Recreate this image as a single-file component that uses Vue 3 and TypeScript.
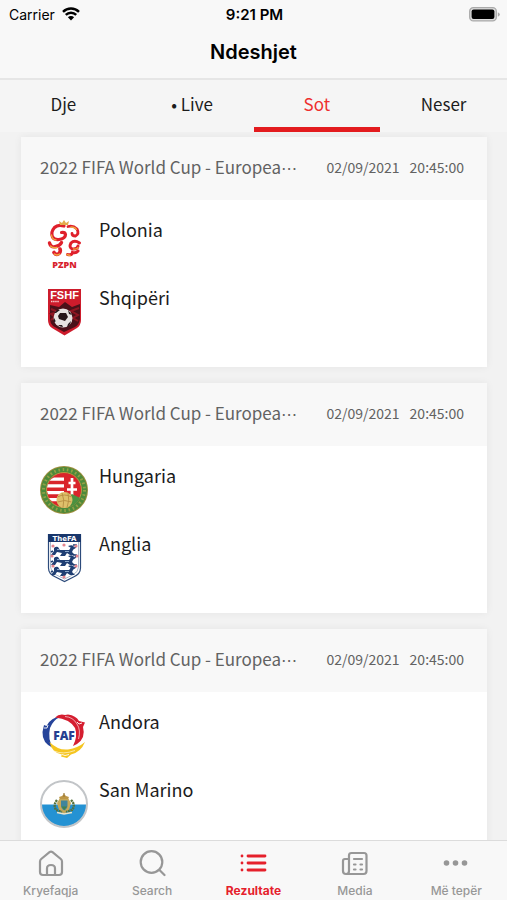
<script setup lang="ts">
import { ref } from 'vue'

type Crest = 'poland' | 'albania' | 'hungary' | 'england' | 'andorra' | 'sanmarino'

interface Team {
  name: string
  crest: Crest
}

interface Match {
  id: number
  league: string
  date: string
  time: string
  teams: Team[]
}

const days = ['Dje', '\u00a0• Live', 'Sot', 'Neser']
const activeDay = ref('Sot')

const tabs = ['Kryefaqja', 'Search', 'Rezultate', 'Media', 'Më tepër']
const activeTab = ref('Rezultate')

const league = '2022 FIFA World Cup - Europea'

const matches: Match[] = [
  { id: 1, league, date: '02/09/2021', time: '20:45:00', teams: [{ name: 'Polonia', crest: 'poland' }, { name: 'Shqipëri', crest: 'albania' }] },
  { id: 2, league, date: '02/09/2021', time: '20:45:00', teams: [{ name: 'Hungaria', crest: 'hungary' }, { name: 'Anglia', crest: 'england' }] },
  { id: 3, league, date: '02/09/2021', time: '20:45:00', teams: [{ name: 'Andora', crest: 'andorra' }, { name: 'San Marino', crest: 'sanmarino' }] },
]

const lionRows = [14, 24, 34]
const roses = [[13, 12], [24, 11], [36, 12], [12, 22], [37, 22], [13, 32], [36, 32], [24, 43]]
</script>

<template>
  <div class="screen">
    <header class="top">
      <div class="status">
        <div class="carrier">
          <span>Carrier</span>
          <svg class="wifi" viewBox="0 0 18 14" aria-hidden="true">
            <path d="M1 4.8a11.3 11.3 0 0 1 16 0M3.8 7.9a7.3 7.3 0 0 1 10.4 0" fill="none" stroke="#000" stroke-width="2.4" />
            <path d="M5.9 10.2a4.4 4.4 0 0 1 6.2 0L9 13.4z" />
          </svg>
        </div>
        <span class="clock">9:21 PM</span>
        <div class="power">
          <svg class="battery" viewBox="0 0 31 15" aria-hidden="true">
            <rect x=".7" y=".7" width="26.6" height="13.2" rx="3.6" fill="#ddd" stroke="#aaa" stroke-width="1.3" />
            <rect x="2.6" y="2.6" width="22.8" height="9.4" rx="2" />
            <path d="M28.8 5.2q2 .8 2 2.3t-2 2.3z" fill="#aaa" />
          </svg>
        </div>
      </div>
      <h1>Ndeshjet</h1>
    </header>

    <nav class="days">
      <button v-for="d in days" :key="d" type="button" class="day" :class="{ on: d === activeDay }" @click="activeDay = d">{{ d }}</button>
    </nav>

    <main class="list">
      <article v-for="m in matches" :key="m.id" class="card">
        <header class="card-head">
          <h2>{{ m.league }}<span class="more">⋯</span></h2>
          <div class="when"><span>{{ m.date }}</span><span>{{ m.time }}</span></div>
        </header>
        <div class="teams">
          <div v-for="t in m.teams" :key="t.name" class="team">
            <svg v-if="t.crest === 'poland'" class="crest" viewBox="0 0 48 48" aria-hidden="true">
              <g fill="none" stroke="#df202b" stroke-linecap="round">
                <path d="M24 6Q18 4 14.500 7.500Q10.500 12 12.500 17Q14.500 20 19 19.500Q25.500 18.500 25.500 14.500Q25 12 21.500 12.500" stroke-width="3.200" />
                <path d="M28 6.500Q33 5 37 9Q39.500 14 35.500 16Q32 16 32 13.500" stroke-width="2.800" />
                <path d="M9.500 23Q11 28 16 26.500Q20 25.500 21.500 22.500" stroke-width="3.400" />
                <path d="M14 32.500Q16 35.500 19 33.500Q21 31.500 20 29" stroke-width="3.600" />
                <path d="M39.500 23Q34.500 19.500 31 23Q28.500 27.500 32.500 29Q37.500 29.500 38 26" stroke-width="3" />
                <path d="M27.500 34.500Q32 35.500 32.500 32.500Q36 33.500 38 31" stroke-width="3" />
              </g>
              <g fill="none" stroke="#f0a63c" stroke-width="1.400" stroke-linecap="round">
                <path d="M31 7Q35 7 36.500 9.500M11.500 15Q12 19.500 16 20M10.500 26Q13 28.500 17 27.500M14.500 34Q17 36 19.500 34M33.500 29Q37 29.500 38 27.500M27 34.500L30 35.500" />
              </g>
              <path d="M20 5l-1-4 3 2 2-3 2 3 3-2-1 4z" fill="#e3ab4c" />
              <text x="24.500" y="48" text-anchor="middle" class="t-pzpn">PZPN</text>
            </svg>

            <svg v-else-if="t.crest === 'albania'" class="crest" viewBox="0 0 48 48" aria-hidden="true">
              <path d="M8 1h33v31q0 5-4 8l-12.500 7.500L12 40q-4-3-4-8z" fill="#cd1c2c" />
              <path d="M10 17l9 2 6-5 7 5 8-3v15q-1 6-5 8l-11 5-11-6q-3-3-3-7z" fill="#4b1119" />
              <path d="M11 21l7 3-7 2 4 3-4 3M39 20l-8 3 7 4-5 3 5 3" fill="none" stroke="#8f1722" stroke-width="2" />
              <circle cx="23" cy="30" r="9.500" fill="#e6e3e1" />
              <path d="M20 25l6 0 2 4-3 4-6-2-1-3zM13.600 29l2 4-1 2q-1-2-1-6M28 36l3-3q-1 5-4 6zM28 22l4 5-3-1zM18 37l4 0 1 2q-3 0-5-2M17 22l3 0-4 3-2 0z" fill="#26171a" />
              <text x="24.500" y="10.500" text-anchor="middle" class="t-fshf">FSHF</text>
              <path d="M11 13.500h8" stroke="#f5c9c9" stroke-width="1.600" stroke-dasharray="1.500 .6" />
            </svg>

            <svg v-else-if="t.crest === 'hungary'" class="crest" viewBox="0 0 48 48" aria-hidden="true">
              <circle cx="24" cy="24" r="24" fill="#9c8d3c" />
              <circle cx="24" cy="24" r="23" fill="#4c8a3a" />
              <circle cx="24" cy="24" r="20.500" fill="none" stroke="#93a046" stroke-width="3" stroke-dasharray="1.600 2.700" />
              <circle cx="24" cy="24" r="17.500" fill="#d9242b" stroke="#b59a43" />
              <path d="M14 11.500h10v3.300H9.700q1.800-2.200 4.300-3.300M8 18.300h16v3.300H7zM7 25h17v3.300H8zM9 32h11v3.300H12q-2-1.500-3-3.300" fill="#fff" />
              <path d="M32 12v19M28.500 17h7M27 23.500h10" stroke="#fff" stroke-width="2.700" />
              <path d="M25 33l7-5 8 4q-5 9-14 9z" fill="#4b9140" />
              <circle cx="24.500" cy="34" r="8" fill="#dec06b" />
              <path d="M17.500 31q7-4 14 0M17.500 36q7-3 14 0M22 27q3 7 1 14.500M28 27q2 7-1 14.500" fill="none" stroke="#b58d42" stroke-width=".9" />
            </svg>

            <svg v-else-if="t.crest === 'england'" class="crest" viewBox="0 0 48 48" aria-hidden="true">
              <path d="M8.500.5h32V34q0 6-7 9l-9 4.500-9-4.500q-7-3-7-9z" fill="#fff" stroke="#2d4b7b" stroke-width="1.200" />
              <path d="M10.500 8v25q0 5 6 8l8 4 8-4q6-3 6-8V8" fill="none" stroke="#a9b8cc" />
              <path d="M8 0h33v8H8z" fill="#18366b" />
              <text x="24.500" y="6.500" text-anchor="middle" class="t-fa">TheFA</text>
              <g v-for="y in lionRows" :key="y" :transform="`translate(0 ${y})`">
                <path d="M14 0q2-2 4-1l2 3h9l2-2-3-2q6-2 6 2l-2 4 3 3h-5l-3-2-2 3h-5l2-3-5-1-2 3h-4l3-4zM15 0l-3 3" fill="#203f73" />
                <path d="M30 1q6 0 6-4h-3M13 3l-2 1" fill="none" stroke="#203f73" stroke-width="1.600" />
                <path d="M17 1.500h3M25 3.500h4" stroke="#8aa6c8" />
              </g>
              <circle v-for="([x, y], i) in roses" :key="i" :cx="x" :cy="y" r="1.600" fill="#e4858e" />
            </svg>

            <svg v-else-if="t.crest === 'andorra'" class="crest" viewBox="0 0 48 48" aria-hidden="true">
              <path d="M21 4.500Q13 8 10 16Q7.500 27 13 36Q2 31 2.500 20L4 13L6.500 14Q11 5 21 4.500z" fill="#26449a" />
              <path d="M15 5.500Q19 1.500 25 3L28 2.500Q36 3.500 39 9L45 10.500L43 15Q46 26 37 32L33 34Q38 24 35 16Q30 7 15 5.500z" fill="#d51e30" />
              <path d="M25 4.500Q33 5 37 12Q41 18 38.500 27" fill="none" stroke="#fff" stroke-width=".6" />
              <path d="M45 30Q41 40 31 42.500L27 46L21 44.500L22 42.500Q12 41 9.500 30Q18 38.500 28 37.500Q38 36 45 30z" fill="#f5c51f" />
              <path d="M14 39Q23 43 35 38.500" fill="none" stroke="#fff" stroke-width=".6" />
              <path d="M4 16l3 0 1-3M37 10l2 2 3-1M22 42.500l3 1 4-1" fill="none" stroke="#fff" stroke-width=".9" />
              <text x="24" y="28" text-anchor="middle" class="t-faf">FAF</text>
            </svg>

            <svg v-else class="crest" viewBox="0 0 48 48" aria-hidden="true">
              <circle cx="24" cy="24" r="22.500" fill="#fff" />
              <path d="M1.500 24.500h45a22.500 22 0 0 1-45 0z" fill="#2492d3" />
              <circle cx="24" cy="24" r="23" fill="none" stroke="#c2c5c8" stroke-width="2" />
              <path d="M20 18l-3 5 2 7 5 4 5-4 2-7-3-5z" fill="#c6a858" />
              <path d="M21 20.500h6.500v5q0 3-3.250 5-3.250-2-3.250-5z" fill="#3f859b" />
              <path d="M21.500 26.500h5.500l-2.750 3.500z" fill="#448247" />
              <path d="M17 20q-4 5-1 10l6 2M31 20q5 5 1 10l-6 2" fill="none" stroke="#55723d" stroke-width="2.400" stroke-dasharray="2 .7" />
              <path d="M20 19l-1-2 3-1 2-2 2 2 3 1-1 2z" fill="#bc9646" />
              <path d="M24 13v4" stroke="#9c7a37" stroke-width="1.200" />
              <path d="M17 32.500l7 1.500 8-1.500" fill="none" stroke="#e9e4cc" stroke-width="1.300" />
            </svg>
            <span class="name">{{ t.name }}</span>
          </div>
        </div>
      </article>
    </main>

    <nav class="tabbar">
      <button v-for="(t, i) in tabs" :key="t" type="button" class="tab" :class="{ on: t === activeTab }" @click="activeTab = t">
        <svg class="icon" viewBox="0 0 28 28" aria-hidden="true">
          <g fill="none" stroke="currentColor" stroke-width="2.200" stroke-linecap="round" stroke-linejoin="round">
            <template v-if="i === 0">
              <path d="M3 12.500Q3 11 4.200 10L12.500 3.200Q14 2 15.500 3.200L23.800 10Q25 11 25 12.500V23Q25 26 22 26H6Q3 26 3 23z" />
              <path d="M10 26V19.500Q10 16 14 16T18 19.500V26" />
            </template>
            <template v-else-if="i === 1">
              <circle cx="13.500" cy="13" r="10.800" />
              <path d="M21.500 21l5 5" />
            </template>
            <template v-else-if="i === 2">
              <path d="M9 7h17M9 14h17M9 21h17" stroke-width="2.800" />
              <path d="M3 7h.01M3 14h.01M3 21h.01" stroke-width="2.800" />
            </template>
            <template v-else-if="i === 3">
              <path d="M8 22V6.500Q8 4 10.500 4H23Q25.500 4 25.500 6.500V22Q25.500 25 22.500 25H5Q2 25 2 22V12Q2 10 4 10H7.500M8 11V22Q8 25 5 25" />
              <path d="M13 10h8M13 15.500h1.500M19.500 15.500H21M13 20.500h1.500M19.500 20.500H21" />
            </template>
            <path v-else d="M4.500 14h.01M13.500 14h.01M22.500 14h.01" stroke-width="5.600" />
          </g>
        </svg>
        <span>{{ t }}</span>
      </button>
    </nav>
  </div>
</template>

<style>
body {
  margin: 0;
}
</style>

<style scoped>
.screen {
  display: flex;
  flex-direction: column;
  height: 100vh;
  overflow: hidden;
  background: #f2f2f2;
  font-family: "Noto Sans CJK JP", "Noto Sans", sans-serif;
  color: #1c1c1c;
}
button {
  margin: 0;
  padding: 0;
  border: 0;
  background: none;
  font: inherit;
  color: inherit;
}
.top {
  flex: none;
  background: #f8f8f8;
  border-bottom: 2px solid #e6e6e6;
  font-family: Inter, sans-serif;
  color: #000;
}
.status {
  display: grid;
  grid-template-columns: 1fr auto 1fr;
  align-items: center;
  height: 28px;
  padding: 0 7px 0 9px;
  font-size: 14px;
}
.carrier {
  display: flex;
  align-items: center;
  gap: 7px;
}
.wifi {
  width: 18px;
  height: 14px;
}
.clock {
  font-size: 15px;
  font-weight: 600;
}
.power {
  display: flex;
  justify-content: flex-end;
}
.battery {
  width: 31px;
  height: 15px;
}
h1 {
  margin: 0;
  height: 50px;
  line-height: 48px;
  font-size: 20px;
  font-weight: 600;
  text-align: center;
}
.days {
  flex: none;
  display: grid;
  grid-template-columns: repeat(4, 1fr);
  height: 52px;
  background: #f5f5f5;
}
.day {
  border-bottom: 5px solid transparent;
  font-size: 17px;
  line-height: 24px;
}
.day.on {
  color: #ee2f2f;
  border-color: #e31b1e;
}
.list {
  flex: 1;
  min-height: 0;
  overflow: hidden;
  display: flex;
  flex-direction: column;
  gap: 16px;
  padding: 5px 20px 0 21px;
}
.card {
  flex: none;
  background: #fff;
  box-shadow: 0 0 8px rgba(0, 0, 0, 0.06);
}
.card-head {
  display: flex;
  align-items: center;
  justify-content: space-between;
  gap: 16px;
  box-sizing: border-box;
  height: 63px;
  padding: 0 23px 3px 19px;
  background: #f8f8f8;
  color: #626262;
}
h2 {
  margin: 0;
  font-size: 17px;
  line-height: 24px;
  font-weight: 400;
  white-space: nowrap;
}
.more {
  font-family: "DejaVu Sans", sans-serif;
  font-size: 16px;
  line-height: 1;
}
.when {
  display: flex;
  gap: 10px;
  font-size: 14px;
  line-height: 24px;
  white-space: nowrap;
}
.teams {
  display: flex;
  flex-direction: column;
  gap: 20px;
  padding: 20px 19px 31px;
}
.team {
  display: flex;
  gap: 11px;
  height: 48px;
}
.crest {
  flex: none;
  width: 48px;
  height: 48px;
  overflow: visible;
}
.name {
  font-size: 18px;
  line-height: 18px;
}
.t-pzpn {
  font: 800 9px "Open Sans", sans-serif;
  fill: #d81f2c;
}
.t-fshf {
  font: 700 11px "Liberation Sans", sans-serif;
  fill: #fff;
}
.t-fa {
  font: 700 7px "DejaVu Sans", sans-serif;
  fill: #fff;
}
.t-faf {
  font: 800 12px "Open Sans", sans-serif;
  fill: #263f91;
}
.tabbar {
  flex: none;
  display: grid;
  grid-template-columns: repeat(5, 1fr);
  height: 59px;
  background: #f8f8f8;
  border-top: 1px solid #dcdcdc;
}
.tab {
  display: flex;
  flex-direction: column;
  align-items: center;
  gap: 6px;
  padding-top: 8px;
  color: #979797;
  font-family: Inter, sans-serif;
  font-size: 12px;
  line-height: 16px;
  font-weight: 500;
}
.tab.on {
  color: #e5202b;
  font-weight: 700;
}
.icon {
  width: 28px;
  height: 28px;
}
</style>
